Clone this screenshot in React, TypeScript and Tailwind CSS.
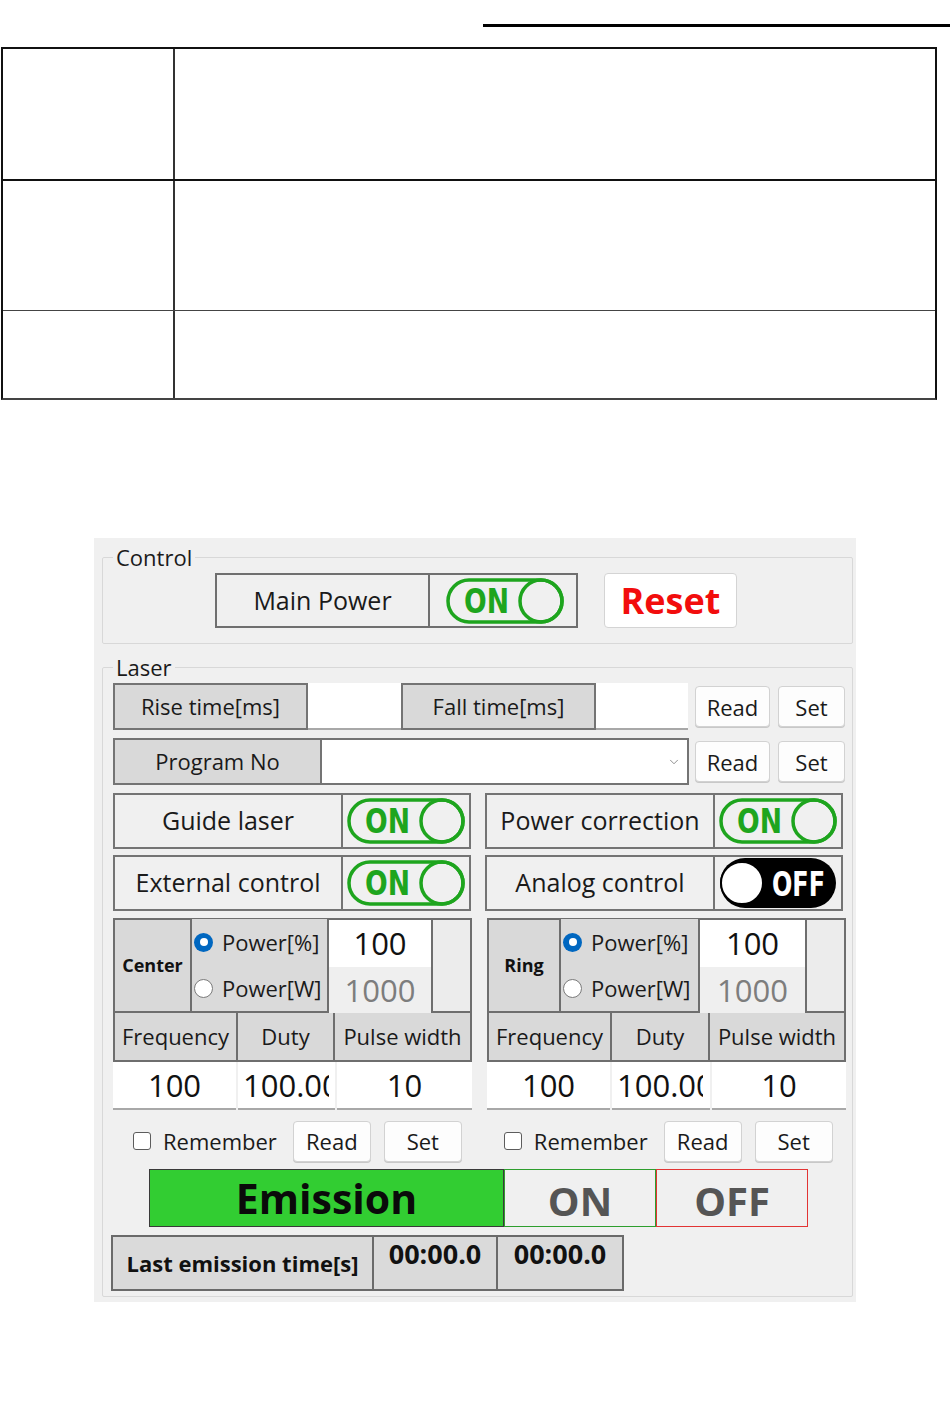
import { ChevronDown } from "lucide-react";

const GREEN = "#1ea51e";

function Toggle({ on }: { on: boolean }) {
  if (on) {
    return (
      <svg width="118" height="46" viewBox="0 0 118 46">
        <rect x="2" y="2" width="114" height="42" rx="21" fill="none" stroke={GREEN} strokeWidth="3.5" />
        <circle cx="95" cy="23" r="21" fill="none" stroke={GREEN} strokeWidth="3.5" />
        <text
          x="18"
          y="35"
          fill={GREEN}
          fontFamily="'DejaVu Sans Condensed', 'DejaVu Sans', sans-serif"
          fontWeight="bold"
          fontSize="34"
          textLength="45"
          lengthAdjust="spacingAndGlyphs"
        >
          ON
        </text>
      </svg>
    );
  }
  return (
    <svg width="118" height="52" viewBox="0 0 118 52">
      <rect x="1" y="1" width="116" height="50" rx="25" fill="#000" />
      <circle cx="23" cy="26" r="21" fill="#fff" stroke="#000" strokeWidth="2" />
      <text
        x="53"
        y="39"
        fill="#fff"
        fontFamily="'DejaVu Sans Condensed', 'DejaVu Sans', sans-serif"
        fontWeight="bold"
        fontSize="33"
        textLength="53"
        lengthAdjust="spacingAndGlyphs"
      >
        OFF
      </text>
    </svg>
  );
}

function Btn({ label, w }: { label: string; w: string }) {
  return (
    <button
      className={`${w} h-[41px] bg-[#fdfdfd] border border-[#d2d2d2] rounded-[4px] shadow-[0_1px_0_#c8c8c8] text-[22px] text-[#1a1a1a] leading-none`}
    >
      {label}
    </button>
  );
}

function SwitchRow({ label, on }: { label: string; on: boolean }) {
  return (
    <div className="w-[358px] h-[56px] flex border-2 border-[#747474] bg-[#f0f0f0]">
      <div className="w-[228px] border-r-2 border-[#747474] flex items-center justify-center text-[25px] text-[#1a1a1a]">
        {label}
      </div>
      <div className="flex-1 flex items-center justify-center">
        <Toggle on={on} />
      </div>
    </div>
  );
}

function Radio({ checked, label }: { checked: boolean; label: string }) {
  return (
    <div className="flex items-center gap-[9px] h-[46px]">
      {checked ? (
        <span className="w-[19px] h-[19px] rounded-full bg-[#0067c0] flex items-center justify-center">
          <span className="w-[8px] h-[8px] rounded-full bg-white" />
        </span>
      ) : (
        <span className="w-[19px] h-[19px] rounded-full bg-white border border-[#7a7a7a]" />
      )}
      <span className="text-[22px] text-[#1a1a1a]">{label}</span>
    </div>
  );
}

type BeamProps = {
  name: string;
  nameW: string;
  radioW: string;
  valueW: string;
  cols: [string, string, string];
};

function BeamGroup({ name, nameW, radioW, valueW, cols }: BeamProps) {
  const headers = ["Frequency", "Duty", "Pulse width"];
  return (
    <div className="w-[359px] flex flex-col">
      <div className="h-[95px] flex border-2 border-[#6e6e6e]">
        <div className={`${nameW} bg-[#d9d9d9] border-r-2 border-[#6e6e6e] flex items-center justify-center text-[18px] font-bold text-[#111]`}>
          {name}
        </div>
        <div className={`${radioW} bg-[#dadada] border-r-2 border-[#6e6e6e] flex flex-col pl-[2px] -mt-[1px]`}>
          <Radio checked label="Power[%]" />
          <Radio checked={false} label="Power[W]" />
        </div>
        <div className={`${valueW} flex flex-col`}>
          <div className="h-[48px] bg-white flex items-center justify-center text-[31px] text-[#111]">100</div>
          <div className="flex-1 bg-[#efefef] flex items-center justify-center text-[31px] text-[#7d7d7d]">1000</div>
        </div>
        <div className="flex-1 bg-[#ececec] border-l-2 border-[#6e6e6e]" />
      </div>
      <div className="h-[49px] flex border-x-2 border-b-2 border-[#6e6e6e] bg-[#d9d9d9]">
        {headers.map((h, i) => (
          <div
            key={h}
            className={`${cols[i]} ${i < 2 ? "border-r-2 border-[#6e6e6e]" : "flex-1"} flex items-center justify-center text-[22px] text-[#1a1a1a]`}
          >
            {h}
          </div>
        ))}
      </div>
      <div className="h-[48px] flex gap-[2px] text-[31px] text-[#111]">
        <div className={`${cols[0]} bg-white border-b-2 border-[#a8a8a8] flex items-center justify-center`}>100</div>
        {/* duty box is too narrow for its value, so it gets cut off */}
        <div className={`${cols[1]} bg-white border-b-2 border-[#a8a8a8] flex items-center`}>
          <div className="w-[91px] pl-[5px] overflow-hidden whitespace-nowrap">100.00</div>
        </div>
        <div className="flex-1 bg-white border-b-2 border-[#a8a8a8] flex items-center justify-center">10</div>
      </div>
    </div>
  );
}

function RememberRow() {
  return (
    <div className="flex items-center">
      <span className="w-[18px] h-[18px] rounded-[3px] border border-[#5c5c5c] bg-white" />
      <span className="ml-[12px] text-[22px] text-[#1a1a1a]">Remember</span>
      <div className="ml-[16px] flex gap-[13px]">
        <Btn label="Read" w="w-[78px]" />
        <Btn label="Set" w="w-[78px]" />
      </div>
    </div>
  );
}

export default function App() {
  return (
    <div className="min-h-[1408px] bg-white font-['Open_Sans','Noto_Sans',sans-serif]">
      {/* rule above the table */}
      <div className="pt-[24px]">
        <div className="ml-[483px] h-[3px] bg-black" />
      </div>

      {/* empty spec table */}
      <div className="mt-[20px] ml-[1px] w-[936px] border-2 border-[#111] border-b-[#444]">
        <div className="h-[132px] flex border-b-2 border-[#111]">
          <div className="w-[172px] border-r-2 border-[#333]" />
        </div>
        <div className="h-[130px] flex border-b border-[#444]">
          <div className="w-[172px] border-r-2 border-[#333]" />
        </div>
        <div className="h-[87px] flex">
          <div className="w-[172px] border-r-2 border-[#333]" />
        </div>
      </div>

      {/* control panel */}
      <div className="mt-[138px] ml-[94px] w-[762px] h-[764px] bg-[#f0f0f0] pt-[5px] pl-[8px] pr-[3px]">
        <fieldset className="border border-[#d8d8d8] rounded-[2px] pt-[2px] pb-[15px]">
          <legend className="ml-[10px] px-[3px] text-[22px] leading-[28px] text-[#1a1a1a]">Control</legend>
          <div className="flex items-center pl-[112px]">
            <div className="w-[363px] h-[55px] flex border-2 border-[#6f6f6f]">
              <div className="w-[213px] border-r-2 border-[#6f6f6f] flex items-center justify-center text-[25px] text-[#1a1a1a]">
                Main Power
              </div>
              <div className="flex-1 flex items-center justify-center pl-[4px]">
                <Toggle on />
              </div>
            </div>
            <button className="ml-[26px] w-[133px] h-[55px] bg-white border border-[#d4d4d4] rounded-[4px] text-[36px] font-bold text-[#f20d0d] leading-none">
              Reset
            </button>
          </div>
        </fieldset>

        <fieldset className="mt-[9px] border border-[#d8d8d8] rounded-[2px] pt-[2px] pb-[5px]">
          <legend className="ml-[10px] px-[3px] text-[22px] leading-[28px] text-[#1a1a1a]">Laser</legend>
          <div className="pl-[10px]">
            {/* rise / fall time */}
            <div className="flex items-center h-[47px]">
              <div className="w-[195px] h-full bg-[#d9d9d9] border-2 border-[#747474] flex items-center justify-center text-[22px] text-[#1a1a1a]">
                Rise time[ms]
              </div>
              <div className="w-[93px] h-full bg-white border-b-2 border-[#a8a8a8]" />
              <div className="w-[195px] h-full bg-[#d9d9d9] border-2 border-[#747474] flex items-center justify-center text-[22px] text-[#1a1a1a]">
                Fall time[ms]
              </div>
              <div className="w-[92px] h-full bg-white border-b-2 border-[#a8a8a8]" />
              <div className="ml-[7px] flex gap-[8px]">
                <Btn label="Read" w="w-[75px]" />
                <Btn label="Set" w="w-[67px]" />
              </div>
            </div>

            {/* program number */}
            <div className="mt-[8px] flex items-center h-[47px]">
              <div className="w-[209px] h-full bg-[#d9d9d9] border-2 border-[#747474] flex items-center justify-center text-[22px] text-[#1a1a1a]">
                Program No
              </div>
              <div className="w-[367px] h-full bg-white border-2 border-l-0 border-[#747474] flex items-center justify-end pr-[6px]">
                <ChevronDown size={14} strokeWidth={1.25} color="#666" />
              </div>
              <div className="ml-[6px] flex gap-[8px]">
                <Btn label="Read" w="w-[75px]" />
                <Btn label="Set" w="w-[67px]" />
              </div>
            </div>

            {/* switches */}
            <div className="mt-[8px] flex gap-[14px]">
              <SwitchRow label="Guide laser" on />
              <SwitchRow label="Power correction" on />
            </div>
            <div className="mt-[6px] flex gap-[14px]">
              <SwitchRow label="External control" on />
              <SwitchRow label="Analog control" on={false} />
            </div>

            {/* center / ring beams */}
            <div className="mt-[7px] flex gap-[15px]">
              <BeamGroup
                name="Center"
                nameW="w-[77px]"
                radioW="w-[137px]"
                valueW="w-[102px]"
                cols={["w-[123px]", "w-[97px]", "w-[136px]"]}
              />
              <BeamGroup
                name="Ring"
                nameW="w-[72px]"
                radioW="w-[139px]"
                valueW="w-[105px]"
                cols={["w-[123px]", "w-[98px]", "w-[136px]"]}
              />
            </div>

            <div className="mt-[10px] flex h-[42px] pl-[20px] gap-[42px]">
              <RememberRow />
              <RememberRow />
            </div>

            {/* emission */}
            <div className="mt-[7px] ml-[36px] flex h-[58px]">
              <div className="w-[355px] bg-[#32cd32] border border-[#3a3a3a] flex items-center justify-center text-[41px] font-bold text-[#0a0a0a] leading-none">
                Emission
              </div>
              <div className="w-[152px] bg-[#f0f0f0] border border-[#2e9e2e] flex items-center justify-center pt-[6px] text-[40px] font-bold text-[#555] leading-none">
                ON
              </div>
              <div className="w-[152px] bg-[#f0f0f0] border-[1.5px] border-[#e23434] flex items-center justify-center pt-[6px] text-[40px] font-bold text-[#555] leading-none">
                OFF
              </div>
            </div>

            <div className="mt-[8px] -ml-[2px] flex h-[56px]">
              <div className="w-[263px] bg-[#dadada] border-2 border-[#6a6a6a] flex items-center justify-center text-[22px] font-bold text-[#111]">
                Last emission time[s]
              </div>
              <div className="w-[124px] bg-[#dadada] border-2 border-l-0 border-[#6a6a6a] flex justify-center pt-[3px] text-[27px] font-bold leading-none text-[#111]">
                00:00.0
              </div>
              <div className="w-[126px] bg-[#dadada] border-2 border-l-0 border-[#6a6a6a] flex justify-center pt-[3px] text-[27px] font-bold leading-none text-[#111]">
                00:00.0
              </div>
            </div>
          </div>
        </fieldset>
      </div>
    </div>
  );
}
